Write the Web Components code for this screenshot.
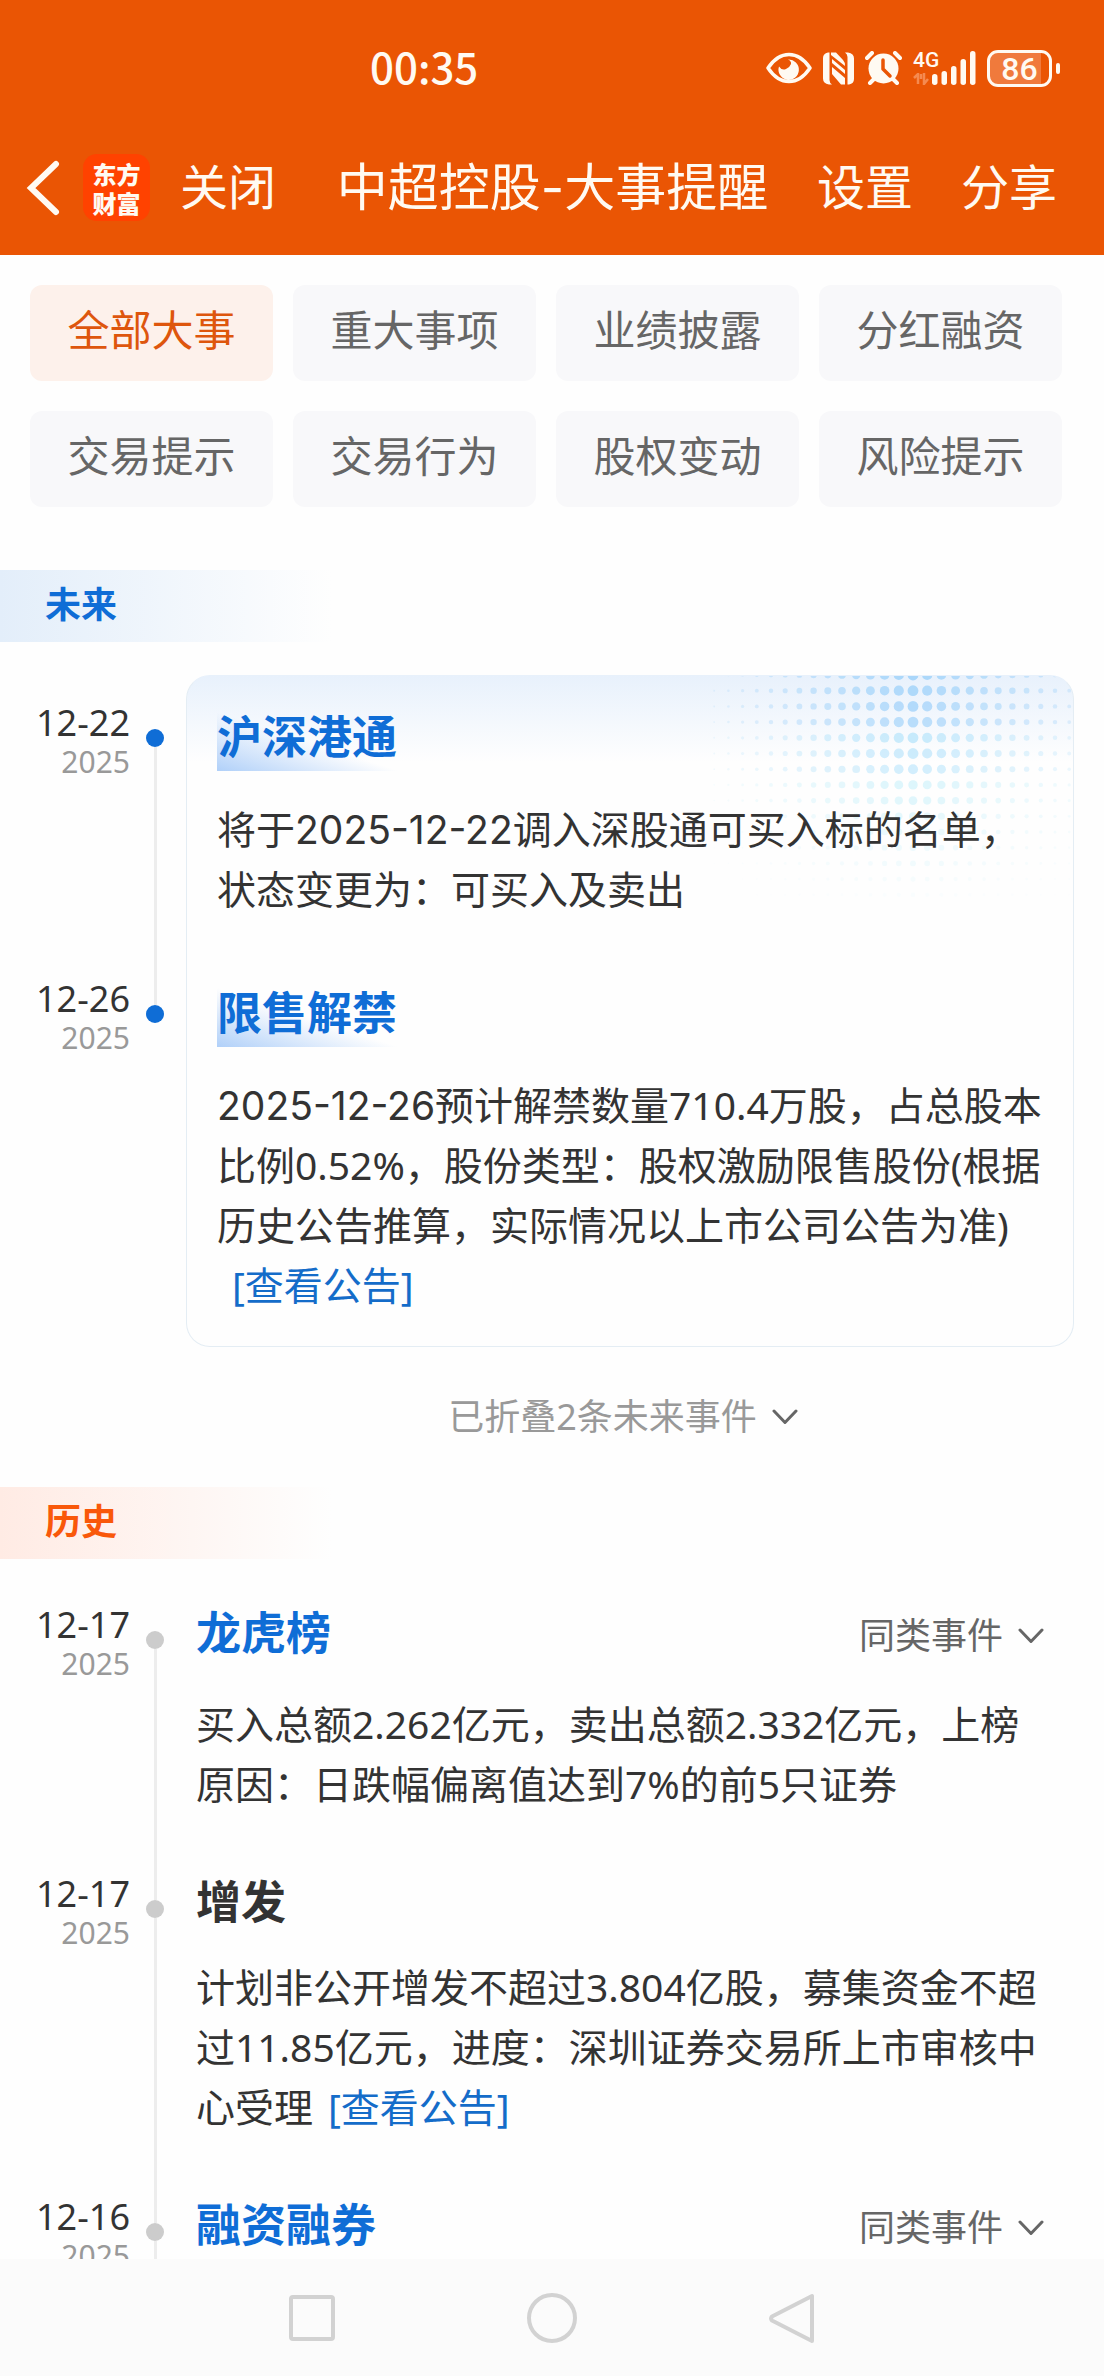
<!DOCTYPE html>
<html lang="zh-CN">
<head>
<meta charset="utf-8">
<meta name="viewport" content="width=device-width">
<title>中超控股-大事提醒</title>
<style>
  html, body { margin: 0; height: 100%; }
  body {
    font-family: "Noto Sans", "Noto Sans CJK SC", sans-serif;
    color: #333;
    background: #fefefe;
    --brand: #ea5504;
    --blue: #0f6dd6;
    --muted: #999;
    --side: 30px;
  }
</style>
</head>
<body>
<app-shell>
  <status-bar slot="top" time="00:35" battery="86"></status-bar>
  <title-bar slot="top">中超控股-大事提醒</title-bar>

  <filter-grid>
    <filter-chip active>全部大事</filter-chip>
    <filter-chip>重大事项</filter-chip>
    <filter-chip>业绩披露</filter-chip>
    <filter-chip>分红融资</filter-chip>
    <filter-chip>交易提示</filter-chip>
    <filter-chip>交易行为</filter-chip>
    <filter-chip>股权变动</filter-chip>
    <filter-chip>风险提示</filter-chip>
  </filter-grid>

  <section-band kind="future">未来</section-band>
  <event-card>
    <timeline-event kind="future" day="12-22" year="2025" heading="沪深港通" first>将于<time>2025-12-22</time>调入深股通可买入标的名单，状态变更为：可买入及卖出</timeline-event>
    <timeline-event kind="future" day="12-26" year="2025" heading="限售解禁" last><time>2025-12-26</time>预计解禁数量710.4万股，占总股本比例0.52%，股份类型：股权激励限售股份(根据历史公告推算，实际情况以上市公司公告为准) <a href="#notice">[查看公告]</a></timeline-event>
  </event-card>
  <fold-toggle>已折叠2条未来事件</fold-toggle>

  <section-band kind="past">历史</section-band>
  <event-list>
    <timeline-event kind="past" day="12-17" year="2025" heading="龙虎榜" linked similar first>买入总额2.262亿元，卖出总额2.332亿元，上榜原因：日跌幅偏离值达到7%的前5只证券</timeline-event>
    <timeline-event kind="past" day="12-17" year="2025" heading="增发">计划非公开增发不超过3.804亿股，募集资金不超过11.85亿元，进度：深圳证券交易所上市审核中心受理<a href="#notice">[查看公告]</a></timeline-event>
    <timeline-event kind="past" day="12-16" year="2025" heading="融资融券" linked similar></timeline-event>
  </event-list>

  <system-nav slot="bottom"></system-nav>
</app-shell>

<script>
const CHEVRON = `<svg width="26" height="16" viewBox="0 0 26 16" aria-hidden="true"><path d="M2 2l11 11.500L24 2" fill="none" stroke="#666" stroke-width="3" stroke-linecap="round" stroke-linejoin="round"/></svg>`;

function define(name, render) {
  customElements.define(name, class extends HTMLElement {
    constructor() {
      super();
      this.attachShadow({ mode: 'open' });
    }
    connectedCallback() {
      this.shadowRoot.innerHTML = render(this);
    }
  });
}

define('app-shell', () => `
<style>
  :host { display: flex; flex-direction: column; height: 100vh; }
  header, footer { flex: none; }
  header { background: var(--brand); color: #fffaf2; }
  main { flex: 1; min-height: 0; overflow: hidden; padding-top: 30px; }
</style>
<header><slot name="top"></slot></header>
<main><slot></slot></main>
<footer><slot name="bottom"></slot></footer>`);

define('status-bar', el => `
<style>
  :host { display: grid; grid-template-columns: 1fr auto; align-items: center; height: 104px; padding: 16px 44px 0 370px;
          font-family: Roboto, "Noto Sans CJK SC", sans-serif; font-weight: 500; }
  time { font-family: "Noto Sans CJK SC", sans-serif; font-size: 42px; line-height: 48px; padding-bottom: 4px; }
  .icons { display: flex; align-items: center; gap: 11px; }
  svg { display: block; }
  .cell { display: flex; align-items: flex-end; }
  .net { display: flex; flex-direction: column; justify-content: space-between; height: 34px; width: 18px; }
  .net span { font-size: 21px; line-height: 19px; }
  .battery { display: flex; align-items: center; gap: 4px; }
  .body { box-sizing: border-box; width: 65px; height: 37px; border: 3px solid; border-radius: 11px; font-size: 32px; line-height: 32px; text-align: center;
          background: linear-gradient(90deg, #f07a3c 87%, transparent 87%); }
  .cap { width: 4px; height: 11px; border-radius: 2px; background: currentColor; }
</style>
<time>${el.getAttribute('time')}</time>
<div class="icons">
  <svg width="46" height="32" viewBox="0 0 46 32" fill="none" stroke="currentColor">
    <path d="M2 16C8 7 15 2.500 23 2.500S38 7 44 16C38 25 31 29.500 23 29.500S8 25 2 16z" stroke-width="3.500" stroke-linejoin="round"/>
    <path d="M22 7.500a10.200 10.200 0 1 1-9 7q3 4.500 7 2.500t5-5q.500-3-3-4.500z" fill="currentColor" stroke="none"/>
  </svg>
  <svg width="31" height="33" viewBox="0 0 31 33" fill="currentColor">
    <path d="M5 .500h1.500V28q0 3 2.500 4.500H6q-6-1-6-6V6Q0 1.500 5 .500z"/>
    <path d="M26 32.500h-1.500V5q0-3-2.500-4.500h3q6 1 6 6V27q0 4.500-5 5.500z"/>
    <path d="M8 .500h5L20 8q2 2 2 6L8 3zM9 7l13 11v4L9 11zM9 15l13 11v6.500h-4L9 22z"/>
  </svg>
  <svg width="37" height="34" viewBox="0 0 37 34">
    <circle cx="18.500" cy="17.500" r="15" fill="currentColor"/>
    <path d="M2 7l5-5M35 7l-5-5M5 32l4-4M32 32l-4-4" stroke="currentColor" stroke-width="4" stroke-linecap="round"/>
    <path d="M18 9v9l7 7" fill="none" stroke="#ea5504" stroke-width="3.500" stroke-linecap="round" stroke-linejoin="round"/>
  </svg>
  <div class="cell">
    <div class="net">
      <span>4G</span>
      <svg width="16" height="12" viewBox="0 0 16 12" fill="none" stroke="#f58a50" stroke-width="2.500"><path d="M1 5l4-4v10M15 6l-4 5V0M8 1v5"/></svg>
    </div>
    <svg width="45" height="34" viewBox="0 0 45 34" fill="currentColor">
      <rect x="1" y="23" width="5.500" height="11" rx="2.700"/><rect x="10.500" y="20" width="5.500" height="14" rx="2.700"/>
      <rect x="20" y="15" width="5.500" height="19" rx="2.700"/><rect x="29.500" y="8" width="5.500" height="26" rx="2.700"/>
      <rect x="39" y="0" width="5.500" height="34" rx="2.700"/>
    </svg>
  </div>
  <div class="battery"><div class="body">${el.getAttribute('battery')}</div><div class="cap"></div></div>
</div>`);

define('title-bar', () => `
<style>
  :host { display: grid; grid-template-columns: 1fr auto 1fr; align-items: center; height: 135px; padding: 0 47px 0 26px;
          font-family: Inter, "Noto Sans CJK SC", sans-serif; }
  button { all: unset; cursor: pointer; font-size: 48px; line-height: 60px; }
  h1 { margin: 0; padding-left: 22px; font-size: 51px; line-height: 60px; font-weight: 400; }
  .left { display: flex; align-items: center; }
  .left svg { display: block; }
  .right { display: flex; justify-content: flex-end; gap: 48px; }
  .logo { width: 67px; height: 67px; margin: 0 30px 0 23px; border-radius: 14px; background: #ff4200; display: grid; place-content: center;
          font: 900 24px/29px "Noto Sans CJK SC", sans-serif; text-align: center; }
</style>
<div class="left">
  <button aria-label="返回"><svg width="34" height="56" viewBox="0 0 34 56"><path d="M30 4L5 28L30 52" fill="none" stroke="currentColor" stroke-width="6" stroke-linecap="round" stroke-linejoin="miter"/></svg></button>
  <div class="logo"><span>东方</span><span>财富</span></div>
  <button>关闭</button>
</div>
<h1><slot></slot></h1>
<div class="right"><button>设置</button><button>分享</button></div>`);

define('filter-grid', () => `
<style>
  :host { display: grid; grid-template-columns: repeat(4, 1fr); gap: 30px 20px; padding: 0 42px 63px var(--side); }
</style><slot></slot>`);

define('filter-chip', el => `
<style>
  :host { display: block; }
  button { display: block; box-sizing: border-box; width: 100%; height: 96px; padding: 0 0 6px; border: 0; border-radius: 12px;
           background: #f8f8fa; color: #666; font: inherit; font-size: 42px; line-height: 60px; cursor: pointer; }
  :host([active]) button { background: #fdf1eb; color: #de560d; }
</style><button type="button" aria-pressed="${el.hasAttribute('active')}"><slot></slot></button>`);

define('section-band', () => `
<style>
  :host { display: block; background: linear-gradient(90deg, var(--tint), transparent 332px); }
  :host([kind=future]) { --tint: #e3eefa; color: var(--blue); }
  :host([kind=past]) { --tint: #ffebe4; color: #f9580a; }
  h2 { margin: 0; padding: 0 45px 2px; font-size: 36px; line-height: 70px; font-weight: 700; }
</style><h2><slot></slot></h2>`);

/* Halftone dots: largest at the top centre, shrinking sideways and fading downwards. */
function halftone() {
  let out = '';
  for (let row = 0; row < 15; row++) {
    for (let col = -14; col <= 11; col++) {
      const r = (row < 6 ? 5.4 : 5.4 - (row - 5) * 0.35) * (1 - Math.abs(col) / 17);
      if (r < 0.4) continue;
      const hue = row < 4 ? '#a9d6fa' : row < 7 ? '#b4e3fb' : '#bfeefa';
      const alpha = Math.max(0, 1 - row / 15) * (1 - Math.abs(col) / 19);
      out += `<circle cx="${(202 + col * 14.2).toFixed(1)}" cy="${(-1 + row * 15.7).toFixed(1)}" r="${r.toFixed(2)}" fill="${hue}" opacity="${alpha.toFixed(2)}"/>`;
    }
  }
  return out;
}

define('event-card', () => `
<style>
  :host { display: grid; padding-top: 33px; }
  .card, .items { grid-area: 1 / 1; }
  .card { margin: 0 var(--side) 0 186px; border: 1px solid #e4edf4; border-top-color: #e8f1fb; border-radius: 24px; overflow: hidden;
          display: flex; justify-content: flex-end; align-items: flex-start;
          background: linear-gradient(#e8f1fc, #fefefe 86px); }
  .items { padding: 28px 0 32px; position: relative; }
</style>
<div class="card"><svg width="362" height="240" viewBox="0 0 362 240" aria-hidden="true">${halftone()}</svg></div>
<div class="items"><slot></slot></div>`);

define('event-list', () => `
<style>:host { display: block; padding-top: 46px; }</style><slot></slot>`);

define('timeline-event', el => `
<style>
  :host { display: flex; --dot: #ccc; --inset: 32px; }
  :host([kind=future]) { --dot: #0f6dd6; --inset: 53px; }
  .when { flex: none; width: 130px; text-align: right; }
  .day { display: block; font-size: 36px; line-height: 40px; }
  .year { display: block; font-size: 30px; line-height: 38px; color: var(--muted); }
  .rail { flex: none; width: 18px; margin-left: 16px; display: flex; flex-direction: column; align-items: center; }
  .rail i { width: 3px; background: #ededed; }
  .rail .above { height: 26px; }
  .rail .below { flex: 1; }
  .rail b { width: 18px; height: 18px; border-radius: 50%; background: var(--dot); }
  :host([first]) .above, :host([last]) .below { background: none; }
  article { flex: 1; min-width: 0; padding: 0 54px 60px var(--inset); }
  :host([last]) article { padding-bottom: 0; }
  header { display: flex; justify-content: space-between; align-items: flex-start; margin-bottom: 27px; padding-right: 6px; }
  h3 { margin: 0; font-size: 45px; line-height: 56px; font-weight: 700; }
  :host([linked]) h3 { color: var(--blue); }
  :host([kind=future]) header { padding-top: 8px; margin-bottom: 28px; }
  :host([kind=future]) h3 { color: var(--blue); line-height: 52px; padding-bottom: 8px;
    background: linear-gradient(18deg, #b0d0f9, rgba(255,255,255,0) 50%); }
  p { margin: 0; font-size: 39px; line-height: 60px; }
  button { all: unset; cursor: pointer; display: flex; align-items: center; gap: 15px; color: #666; font-size: 36px; line-height: 62px; }
  svg { display: block; }
  ::slotted(time) { font-family: Inter, sans-serif; line-height: 40px; }
  ::slotted(a) { margin-left: 15px; color: #146cc9; text-decoration: none; white-space: nowrap; }
</style>
<div class="when"><span class="day">${el.getAttribute('day')}</span><span class="year">${el.getAttribute('year')}</span></div>
<div class="rail"><i class="above"></i><b></b><i class="below"></i></div>
<article>
  <header><h3>${el.getAttribute('heading')}</h3>${el.hasAttribute('similar') ? `<button type="button">同类事件${CHEVRON}</button>` : ''}</header>
  <p><slot></slot></p>
</article>`);

define('fold-toggle', () => `
<style>
  :host { display: flex; justify-content: center; padding: 40px 44px 40px 186px; }
  button { all: unset; cursor: pointer; display: flex; align-items: center; gap: 15px; color: var(--muted); font-size: 36px; line-height: 60px; }
  svg { display: block; }
</style><button type="button"><slot></slot>${CHEVRON}</button>`);

define('system-nav', () => `
<style>
  :host { display: flex; justify-content: center; align-items: center; gap: 190px; height: 117px; background: #fbfbfb; }
  button { all: unset; cursor: pointer; }
  svg { display: block; fill: none; stroke: #d2d2d2; stroke-width: 4; stroke-linejoin: round; }
</style>
<button aria-label="最近任务"><svg width="50" height="50"><rect x="4" y="4" width="42" height="42" rx="2"/></svg></button>
<button aria-label="主屏幕"><svg width="50" height="50"><circle cx="25" cy="25" r="23"/></svg></button>
<button aria-label="返回"><svg width="50" height="50"><path d="M45 3v45L5 27.500q-2-2 0-4z"/></svg></button>`);
</script>
</body>
</html>
